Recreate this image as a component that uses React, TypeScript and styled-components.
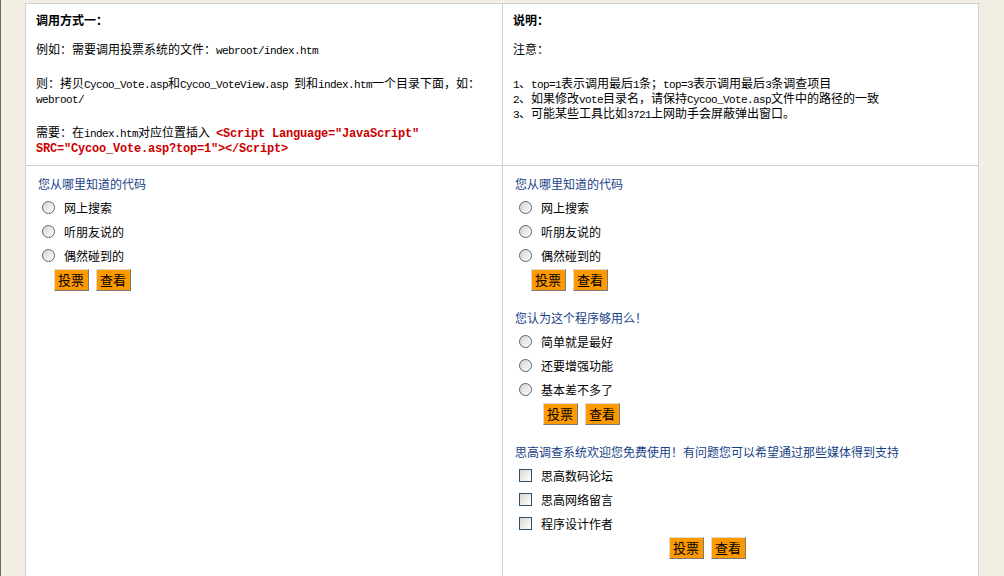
import styled, { createGlobalStyle } from 'styled-components'

type PollData = {
  id: string
  title: string
  kind: 'radio' | 'checkbox'
  options: string[]
}

const firstPoll: PollData = {
  id: 'where',
  title: '您从哪里知道的代码',
  kind: 'radio',
  options: ['网上搜索', '听朋友说的', '偶然碰到的'],
}

const polls: PollData[] = [
  firstPoll,
  {
    id: 'enough',
    title: '您认为这个程序够用么！',
    kind: 'radio',
    options: ['简单就是最好', '还要增强功能', '基本差不多了'],
  },
  {
    id: 'media',
    title: '思高调查系统欢迎您免费使用！有问题您可以希望通过那些媒体得到支持',
    kind: 'checkbox',
    options: ['思高数码论坛', '思高网络留言', '程序设计作者'],
  },
]

const notes = [
  '1、top=1表示调用最后1条；top=3表示调用最后3条调查项目',
  '2、如果修改vote目录名，请保持Cycoo_Vote.asp文件中的路径的一致',
  '3、可能某些工具比如3721上网助手会屏蔽弹出窗口。',
]

// ascii runs get the narrow mono face, like the old half-width latin
function mixed(text: string) {
  return text
    .split(/([\x20-\x7e]+)/)
    .filter(Boolean)
    .map((part, i) =>
      /^[\x20-\x7e]+$/.test(part) ? <Latin key={i}>{part}</Latin> : part
    )
}

function Poll({ poll, scope }: { poll: PollData; scope: string }) {
  const Input = poll.kind === 'radio' ? Radio : Checkbox
  return (
    <PollBox>
      <PollTitle>{poll.title}</PollTitle>
      {poll.options.map((opt) => (
        <Option key={opt}>
          <Input type={poll.kind} name={`${scope}-${poll.id}`} />
          <span>{opt}</span>
        </Option>
      ))}
      <Buttons>
        <Button type="button">投票</Button>
        <Button type="button">查看</Button>
      </Buttons>
    </PollBox>
  )
}

export default function App() {
  return (
    <>
      <GlobalStyle />
      <Page>
        <Table>
          <InfoCell>
            <Heading>调用方式一：</Heading>
            <Para>{mixed('例如：需要调用投票系统的文件：webroot/index.htm')}</Para>
            <Para>
              {mixed('则：拷贝Cycoo_Vote.asp和Cycoo_VoteView.asp 到和index.htm一个目录下面，如：webroot/')}
            </Para>
            <Para>
              {mixed('需要：在index.htm对应位置插入 ')}
              <Code>{'<Script Language="JavaScript" SRC="Cycoo_Vote.asp?top=1"></Script>'}</Code>
            </Para>
          </InfoCell>
          <InfoCell>
            <Heading>说明：</Heading>
            <Para>注意：</Para>
            <div>
              {notes.map((n) => (
                <Line key={n}>{mixed(n)}</Line>
              ))}
            </div>
          </InfoCell>
          <PollCell>
            <Poll poll={firstPoll} scope="left" />
          </PollCell>
          <PollCell>
            {polls.map((p) => (
              <Poll key={p.id} poll={p} scope="right" />
            ))}
          </PollCell>
        </Table>
      </Page>
    </>
  )
}

const GlobalStyle = createGlobalStyle`
  html, body {
    margin: 0;
    padding: 0;
  }
  body {
    min-height: 100vh;
    overflow: hidden;
    background: #f3eee4;
    border-left: 1px solid #716860;
    font-family: 'Noto Sans CJK SC', sans-serif;
    font-size: 12px;
    line-height: 15px;
    color: #000;
  }
`

const Page = styled.div`
  padding: 3px 0 0 24px;
`

const Table = styled.div`
  display: grid;
  grid-template-columns: 476px 475px;
  grid-template-rows: 161px 440px;
  gap: 1px;
  width: 954px;
  box-sizing: border-box;
  border: 1px solid #d0d0d0;
  background: #d0d0d0;
`

const InfoCell = styled.div`
  background: #fff;
  padding: 8px 10px;
  overflow: hidden;
`

const PollCell = styled.div`
  background: #fff;
  padding: 10px 12px;
`

const Heading = styled.div`
  font-weight: bold;
  margin-bottom: 14px;
`

const Para = styled.p`
  margin: 0 0 19px;
  line-height: 15px;

  &:last-child {
    margin-bottom: 0;
  }
`

const Line = styled.div`
  height: 15px;
  line-height: 15px;
`

const Latin = styled.span`
  font-family: 'Liberation Mono', monospace;
  font-size: 11px;
  letter-spacing: -0.6px;
  line-height: 0;
`

const Code = styled.span`
  font-family: 'Liberation Mono', monospace;
  font-size: 12px;
  letter-spacing: -0.2px;
  line-height: 0;
  font-weight: bold;
  color: #cc0000;
`

const PollBox = styled.div`
  width: fit-content;
  margin-bottom: 19px;
`

const PollTitle = styled.div`
  color: #173f87;
  height: 15px;
  margin-bottom: 4px;
`

const Option = styled.label`
  display: flex;
  align-items: center;
  gap: 9px;
  height: 24px;
  padding-left: 4px;
`

const Radio = styled.input`
  appearance: none;
  width: 13px;
  height: 13px;
  margin: 0;
  border: 1px solid #52677f;
  border-radius: 50%;
  box-sizing: border-box;
  background: linear-gradient(135deg, #d6d3ca, #ffffff);
`

const Checkbox = styled.input`
  appearance: none;
  width: 13px;
  height: 13px;
  margin: 0;
  border: 1px solid #31506f;
  box-sizing: border-box;
  background: linear-gradient(135deg, #d9d8d0, #ffffff);
`

const Buttons = styled.div`
  display: flex;
  justify-content: center;
  gap: 7px;
  margin-top: 2px;
`

const Button = styled.button`
  width: 35px;
  height: 22px;
  padding: 0;
  background: #ff9900;
  border: 1px solid;
  border-color: #dedad2 #7a7a7a #7a7a7a #dedad2;
  font-family: 'Noto Sans CJK SC', sans-serif;
  font-size: 13px;
  line-height: 20px;
  color: #000;
`
